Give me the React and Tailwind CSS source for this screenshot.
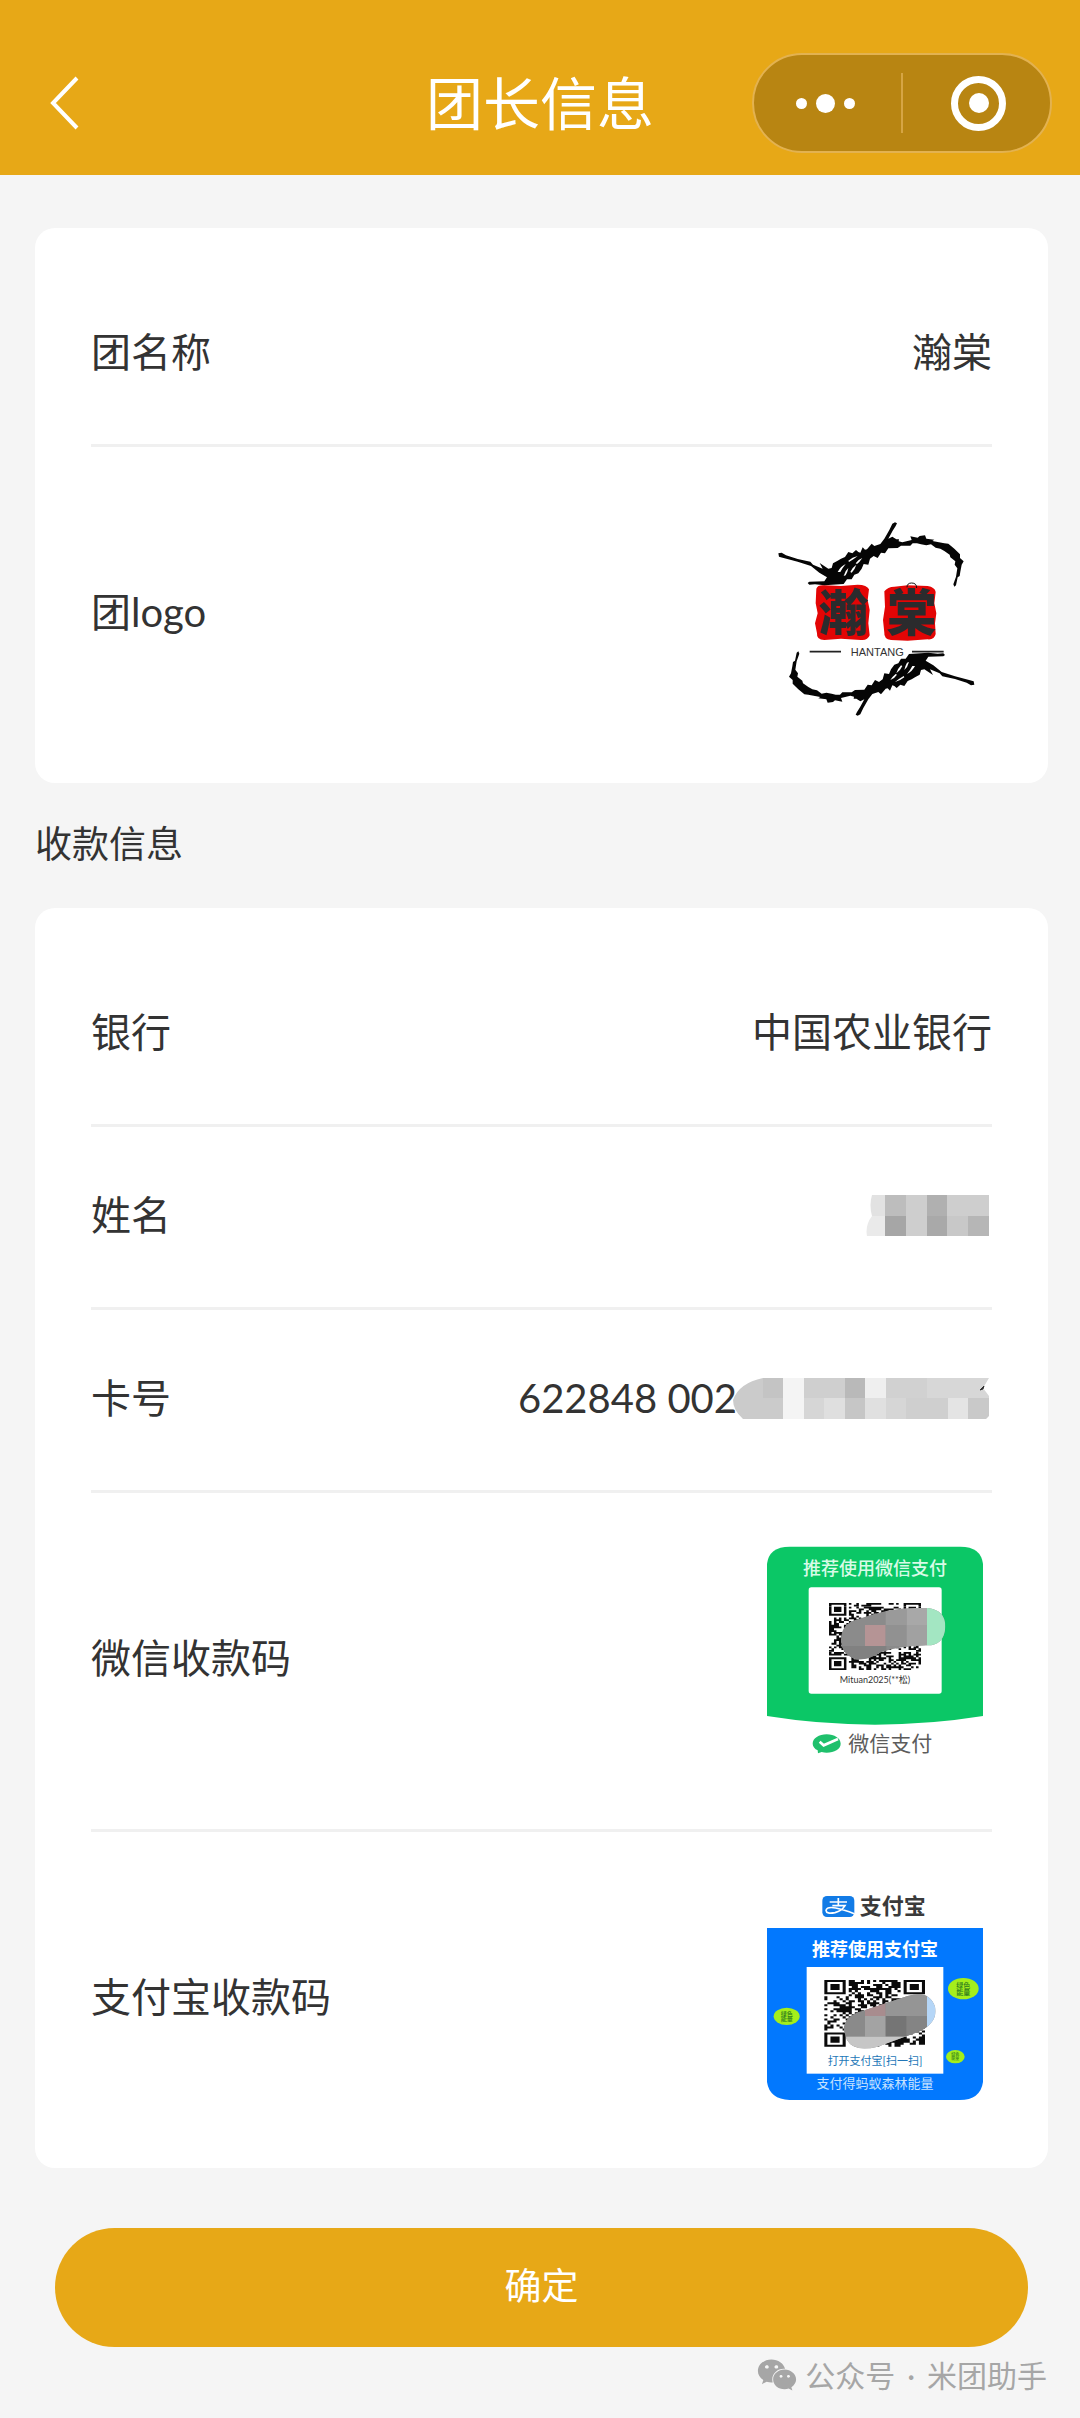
import React from "react";
import { FaWeixin } from "react-icons/fa";

const CJK = "Lato, 'Noto Sans CJK SC', sans-serif";

/* Path data for a QR-style grid: three finder squares plus seeded modules. */
function qrPath(n, x, y, w, h, seed) {
  const cw = w / n;
  const ch = h / n;
  let s = seed;
  const rnd = () => {
    s = (s * 1103515245 + 12345) % 2147483648;
    return s / 2147483648;
  };
  const finder = (r, c) => {
    for (const [fr, fc] of [[0, 0], [0, n - 7], [n - 7, 0]]) {
      const dr = r - fr;
      const dc = c - fc;
      if (dr >= -1 && dr <= 7 && dc >= -1 && dc <= 7) {
        if (dr < 0 || dr > 6 || dc < 0 || dc > 6) return 0;
        const ring = Math.max(Math.abs(dr - 3), Math.abs(dc - 3));
        return ring === 2 ? 0 : 1;
      }
    }
    return -1;
  };
  let d = "";
  for (let r = 0; r < n; r++) {
    for (let c = 0; c < n; c++) {
      const f = finder(r, c);
      const v = rnd() < 0.52;
      if (f === 1 || (f === -1 && v)) {
        d += `M${(x + c * cw).toFixed(1)} ${(y + r * ch).toFixed(1)}h${cw.toFixed(1)}v${ch.toFixed(1)}h-${cw.toFixed(1)}z`;
      }
    }
  }
  return d;
}

const WECHAT_QR = qrPath(37, 264, 249, 276, 201, 77);
const ALIPAY_QR = qrPath(33, 250, 330, 302, 200, 2024);

const BRUSH =
  "M112 190L122 188L135 196L170 207L208 215L216 224L245 236L236 219L262 236L272 234L276 220L290 212L300 206L312 201L322 186L334 190L345 180L352 186L358 188L365 172L372 179L378 178L392 161L400 168L418 162L430 146L445 120L454 101L462 97L468 100L464 108L455 122L442 146L454 140L466 148L474 148L473 154L484 157L512 150L508 139L530 143L536 138L552 136L556 146L580 149L574 153L610 160L622 161L640 176L657 193L657 204L668 214L662 224L658 245L656 258L650 262L645 286L640 290L637 283L645 260L649 235L641 224L643 214L628 202L626 194L610 183L598 176L584 173L570 163L556 166L540 163L528 160L515 160L508 167L480 167L470 174L442 175L432 190L420 188L410 204L398 198L387 206L382 224L368 222L362 236L352 250L340 254L332 268L318 268L308 282L250 286L222 283L205 284L200 279L205 275L250 274L258 262L235 248L210 228L170 215L125 203L114 200Z";
const STREAKS =
  "M290 246Q298 230 314 222Q304 234 298 246ZM308 258Q312 242 322 234Q320 246 314 256ZM328 246Q334 232 346 224Q342 238 332 248ZM322 212Q334 202 350 198Q338 208 324 216ZM344 220Q352 208 364 204Q356 216 348 222Z";

function HantangLogo() {
  return (
    <svg viewBox="51 24 702 702" className="h-[234px] w-[234px]" role="img" aria-label="瀚棠 HANTANG">
      <path
        fill="#e30505"
        d="M226 296Q230 284 250 286L300 288L350 284Q378 284 384 298L380 330L386 360L382 400L386 436Q380 452 360 450L300 446L250 450Q226 450 228 430L222 400L230 370L224 340Z"
      />
      <path
        fill="#e30505"
        d="M430 304Q440 290 460 290L500 286L560 288Q582 292 584 306L580 340L586 370L582 400L584 432Q580 450 560 448L500 452L450 450Q428 446 430 428L426 390L432 350Z"
      />
      <g
        fill="#2b2b2d"
        fontFamily="'Noto Sans CJK SC', sans-serif"
        fontWeight="900"
        fontSize="150"
        textAnchor="middle"
      >
        <text x="308" y="423">瀚</text>
        <text x="512" y="423">棠</text>
      </g>
      <path fill="none" stroke="#111" strokeWidth="3" d="M498 292Q498 279 512 279Q527 279 527 294" />
      <g>
        <path d={BRUSH} fill="#050505" />
        <path d={STREAKS} fill="#fff" />
      </g>
      <g transform="rotate(180 406 387)">
        <path d={BRUSH} fill="#050505" />
        <path d={STREAKS} fill="#fff" />
      </g>
      <path d="M206 485H300M513 485H608" stroke="#222" strokeWidth="5" />
      <text x="409" y="498" fontSize="33" textAnchor="middle" fill="#333" fontFamily="Liberation Sans, sans-serif">
        HANTANG
      </text>
    </svg>
  );
}

function WechatCode() {
  return (
    <svg viewBox="51 72 702 702" className="h-[234px] w-[234px]" role="img" aria-label="微信收款码" fontFamily={CJK}>
      <path fill="#0bc766" d="M78 132Q84 80 146 80H658Q720 80 726 132V588Q402 640 78 588Z" />
      <text x="402" y="165" fontSize="54" fontWeight="500" textAnchor="middle" fill="#d8fbe7">
        推荐使用微信支付
      </text>
      <rect x="203" y="202" width="399" height="319" rx="8" fill="#fff" />
      <path d={WECHAT_QR} fill="#0a0a0a" />
      <clipPath id="wechat-mask">
        <path d="M300 360Q300 310 350 298Q440 264 530 264H560Q613 270 613 320Q610 378 555 376Q480 378 420 396Q385 420 345 418Q302 404 300 360Z" />
      </clipPath>
      <g clipPath="url(#wechat-mask)">
        <rect x="296" y="260" width="320" height="160" fill="#8b8b8b" />
        <rect x="434" y="260" width="63" height="56" fill="#9a9a9a" />
        <rect x="497" y="260" width="61" height="56" fill="#a8a8a8" />
        <rect x="372" y="315" width="62" height="63" fill="#b59495" />
        <rect x="434" y="315" width="63" height="63" fill="#919191" />
        <rect x="497" y="315" width="61" height="63" fill="#a1a1a1" />
        <rect x="558" y="260" width="60" height="120" fill="#a3e6c2" />
        <rect x="296" y="378" width="140" height="44" fill="#818181" />
      </g>
      <text x="402" y="489" fontSize="27" textAnchor="middle" fill="#333">
        Mituan2025(**松)
      </text>
      <path
        fill="#1fc06c"
        d="M257 643C280 643 299 655 299 671C299 687 280 698 257 698C252 698 247 697 242 696L231 700L230 691C221 687 215 679 215 671C215 655 234 643 257 643Z"
      />
      <path d="M236 665L248 676L291 657" fill="none" stroke="#fff" strokeWidth="8" />
      <text x="322" y="693" fontSize="63" fill="#5c5c5c">
        微信支付
      </text>
    </svg>
  );
}

function EnergyBubble({ cx, cy, rx, ry, size }) {
  return (
    <g>
      <ellipse cx={cx} cy={cy} rx={rx} ry={ry} fill="#a4ee1c" />
      <text x={cx} y={cy - 2} fontSize={size} fontWeight="500" textAnchor="middle" fill="#2c7a1e">
        绿色
      </text>
      <text x={cx} y={cy + size - 3} fontSize={size} fontWeight="500" textAnchor="middle" fill="#2c7a1e">
        能量
      </text>
    </g>
  );
}

function AlipayCode() {
  return (
    <svg viewBox="51 39 702 702" className="h-[234px] w-[234px]" role="img" aria-label="支付宝收款码" fontFamily={CJK}>
      <rect x="244" y="78" width="96" height="63" rx="14" fill="#127be6" />
      <g fill="none" stroke="#fff" strokeWidth="5">
        <path d="M266 96H318M292 84V107M274 107H312Q302 123 282 128Q256 133 255 121Q258 109 284 114Q308 119 340 131" />
      </g>
      <text x="356" y="132" fontSize="66" fontWeight="700" fill="#3a3a3a">
        支付宝
      </text>
      <path fill="#0278fe" d="M78 174H726V636Q718 690 656 690H146Q86 688 78 636Z" />
      <text x="402" y="257" fontSize="54" fontWeight="700" textAnchor="middle" fill="#fff">
        推荐使用支付宝
      </text>
      <rect x="197" y="291" width="410" height="320" fill="#fff" />
      <path d={ALIPAY_QR} fill="#0a0a0a" />
      <clipPath id="alipay-mask">
        <path d="M308 480Q308 436 366 422L500 378Q565 358 582 410Q592 456 536 484L410 530Q340 548 318 510Z" />
      </clipPath>
      <g clipPath="url(#alipay-mask)">
        <rect x="300" y="360" width="290" height="185" fill="#8a8a8a" />
        <rect x="372" y="376" width="62" height="62" fill="#a88c8e" />
        <rect x="434" y="360" width="124" height="78" fill="#959595" />
        <rect x="372" y="438" width="62" height="62" fill="#a3a3a3" />
        <rect x="434" y="438" width="63" height="62" fill="#757575" />
        <rect x="497" y="438" width="61" height="62" fill="#848484" />
        <rect x="558" y="360" width="32" height="140" fill="#b5d6f7" />
        <rect x="300" y="500" width="290" height="45" fill="#c6c6c6" />
      </g>
      <text x="402" y="586" fontSize="33" textAnchor="middle" fill="#2377b8">
        打开支付宝[扫一扫]
      </text>
      <text x="402" y="655" fontSize="39" textAnchor="middle" fill="#c6e2ff">
        支付得蚂蚁森林能量
      </text>
      <EnergyBubble cx={667} cy={356} rx={46} ry={32} size={21} />
      <EnergyBubble cx={137} cy={439} rx={39} ry={26} size={18} />
      <EnergyBubble cx={643} cy={560} rx={28} ry={20} size={12} />
    </svg>
  );
}

/* Mosaic blocks that hide the private part of a value. */
function NameMosaic() {
  return (
    <svg viewBox="0 0 123 41" className="mr-[3px] h-[41px] w-[123px]" role="img" aria-label="已隐藏">
      <path d="M6 0H20V21H6Q3 10 6 0Z" fill="#e2e2e2" />
      <path d="M6 21H20V41H1Q-1 30 6 21Z" fill="#eaeaea" />
      <g shapeRendering="crispEdges">
        <rect x="19" y="0" width="21" height="21" fill="#bdbdbd" />
        <rect x="19" y="21" width="21" height="20" fill="#a6a6a6" />
        <rect x="40" y="0" width="21" height="41" fill="#cecece" />
        <rect x="61" y="0" width="20" height="21" fill="#b0b0b0" />
        <rect x="61" y="21" width="20" height="20" fill="#a9a9a9" />
        <rect x="81" y="0" width="42" height="21" fill="#cecece" />
        <rect x="81" y="21" width="21" height="20" fill="#c8c8c8" />
        <rect x="102" y="21" width="21" height="20" fill="#b6b6b6" />
      </g>
    </svg>
  );
}

const CARD_CELLS = [
  [0, 0, 30, 41, "#cbcbcb"],
  [30, 0, 20, 20, "#c4c4c4"],
  [30, 20, 20, 21, "#cbcbcb"],
  [50, 0, 21, 41, "#f4f4f4"],
  [71, 0, 41, 20, "#cfcfcf"],
  [71, 20, 20, 21, "#d6d6d6"],
  [91, 20, 21, 21, "#dfdfdf"],
  [112, 0, 20, 20, "#b9b9b9"],
  [112, 20, 20, 21, "#c6c6c6"],
  [132, 0, 21, 20, "#efefef"],
  [132, 20, 21, 21, "#e0e0e0"],
  [153, 0, 41, 20, "#d1d1d1"],
  [153, 20, 20, 21, "#d6d6d6"],
  [173, 20, 42, 21, "#cfcfcf"],
  [194, 0, 62, 20, "#d7d7d7"],
  [215, 20, 20, 21, "#e4e4e4"],
  [235, 20, 21, 21, "#c9c9c9"],
];

function CardMosaic() {
  return (
    <svg viewBox="0 0 256 41" className="-ml-1 mr-[3px] h-[41px] w-[256px]" role="img" aria-label="已隐藏">
      <clipPath id="card-mask">
        <path d="M30 0H256L250 10L256 18V38L253 41H10Q0 32 0 22Q6 5 30 0Z" />
      </clipPath>
      <g clipPath="url(#card-mask)" shapeRendering="crispEdges">
        {CARD_CELLS.map(([x, y, w, h, fill]) => (
          <rect key={`${x}-${y}`} x={x} y={y} width={w} height={h} fill={fill} />
        ))}
      </g>
      <path d="M247 12L251 8L250 11Z" fill="#333" stroke="#333" />
    </svg>
  );
}

const ROW = "flex items-center justify-between border-b-3 border-[#f0f0f0] last:border-b-0";

function TextRow({ label, children }) {
  return (
    <div className={`${ROW} pt-[58px] pb-[62px]`}>
      <dt>{label}</dt>
      <dd className="flex items-center">{children}</dd>
    </div>
  );
}

function PictureRow({ label, children }) {
  return (
    <div className={`${ROW} py-[51px]`}>
      <dt className="pb-1.5">{label}</dt>
      <dd>{children}</dd>
    </div>
  );
}

function Card({ children }) {
  return <dl className="rounded-[20px] bg-white px-14 pt-9 text-[40px] leading-[60px]">{children}</dl>;
}

export default function App() {
  return (
    <div className="min-h-screen bg-[#f5f5f5] font-[Lato,'Noto_Sans_CJK_SC',sans-serif] text-[#333]">
      <header className="grid grid-cols-[1fr_auto_1fr] items-center bg-[#e7a817] px-7 pt-[53px] pb-[22px] text-white">
        <button type="button" aria-label="返回" className="ml-5 justify-self-start">
          <svg viewBox="0 0 34 56" className="h-14 w-[34px]" fill="none" stroke="currentColor" strokeWidth="4">
            <path d="M29 3L5 28L29 53" />
          </svg>
        </button>
        <h1 className="text-[57px] leading-[80px]">团长信息</h1>
        <div className="flex h-[100px] w-[300px] items-center justify-self-end rounded-full border-2 border-[#e3b250] bg-[#b88512]">
          <button type="button" aria-label="更多" className="flex flex-1 items-center justify-center gap-[9px] pr-1">
            <span className="size-[11px] rounded-full bg-white" />
            <span className="size-[19px] rounded-full bg-white" />
            <span className="size-[11px] rounded-full bg-white" />
          </button>
          <span className="h-[60px] w-0.5 bg-[#d6a544]" />
          <button type="button" aria-label="关闭" className="flex flex-1 items-center justify-center pl-1">
            <span className="flex size-[55px] items-center justify-center rounded-full border-[7px] border-white">
              <span className="size-5 rounded-full bg-white" />
            </span>
          </button>
        </div>
      </header>

      <main className="pt-[53px] pr-8 pl-[35px]">
        <Card>
          <TextRow label="团名称">瀚棠</TextRow>
          <PictureRow label="团logo">
            <HantangLogo />
          </PictureRow>
        </Card>

        <h2 className="pt-[30px] pb-[34px] text-[37px] leading-[61px]">收款信息</h2>

        <Card>
          <TextRow label="银行">中国农业银行</TextRow>
          <TextRow label="姓名">
            <NameMosaic />
          </TextRow>
          <TextRow label="卡号">
            622848 002
            <CardMosaic />
          </TextRow>
          <PictureRow label="微信收款码">
            <WechatCode />
          </PictureRow>
          <PictureRow label="支付宝收款码">
            <AlipayCode />
          </PictureRow>
        </Card>

        <div className="px-5 pt-[60px]">
          <button type="button" className="h-[119px] w-full rounded-full bg-[#e7a817] pb-1 text-[37px] text-white">
            确定
          </button>
        </div>
      </main>

      <footer className="flex items-center justify-end gap-2 pt-2 pr-[33px] text-[30px] leading-9 text-[#a6a6a6]">
        <FaWeixin className="size-10" aria-hidden="true" />
        <p className="flex gap-3">
          <span>公众号</span>
          <span>·</span>
          <span>米团助手</span>
        </p>
      </footer>
    </div>
  );
}
